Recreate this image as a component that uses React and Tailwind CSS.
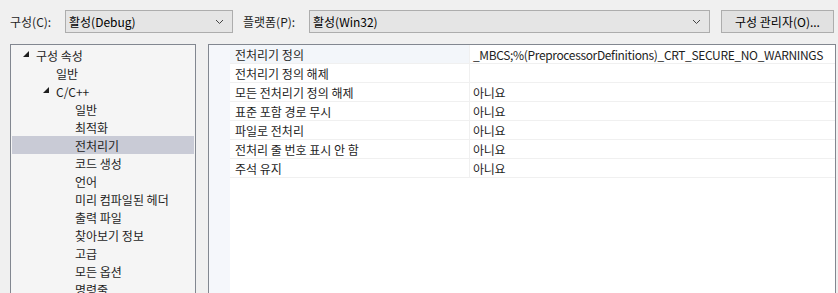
import React from 'react'

const font = { fontFamily: '"Noto Sans CJK KR", "Noto Sans", sans-serif' }

function Chevron(){
  return (
    <svg width="9" height="6" viewBox="0 0 9 6" className="shrink-0">
      <path d="M1 1 L4.5 4.5 L8 1" fill="none" stroke="#444" strokeWidth="1" />
    </svg>
  )
}

function Tri(){
  return (
    <svg width="7" height="7" viewBox="0 0 7 7" className="shrink-0">
      <polygon points="6,0 6,6 0,6" fill="#1e1e1e" />
    </svg>
  )
}

function Combo({ text, width }){
  return (
    <div className={`flex items-center justify-between h-[23px] border border-[#adadad] bg-[#e5e5e5] pl-[3px] pr-[8px] ${width}`}>
      <span className="text-[12px] leading-none text-black">{text}</span>
      <Chevron />
    </div>
  )
}

const tree = [
  { label: '구성 속성', indent: 'pl-[11px]', tri: true },
  { label: '일반', indent: 'pl-[44px]' },
  { label: 'C/C++', indent: 'pl-[31px]', tri: true },
  { label: '일반', indent: 'pl-[63px]' },
  { label: '최적화', indent: 'pl-[63px]' },
  { label: '전처리기', indent: 'pl-[63px]', sel: true },
  { label: '코드 생성', indent: 'pl-[63px]' },
  { label: '언어', indent: 'pl-[63px]' },
  { label: '미리 컴파일된 헤더', indent: 'pl-[63px]' },
  { label: '출력 파일', indent: 'pl-[63px]' },
  { label: '찾아보기 정보', indent: 'pl-[63px]' },
  { label: '고급', indent: 'pl-[63px]' },
  { label: '모든 옵션', indent: 'pl-[63px]' },
  { label: '명령줄', indent: 'pl-[63px]' },
]

const props = [
  ['전처리기 정의', '_MBCS;%(PreprocessorDefinitions)_CRT_SECURE_NO_WARNINGS', true],
  ['전처리기 정의 해제', ''],
  ['모든 전처리기 정의 해제', '아니요'],
  ['표준 포함 경로 무시', '아니요'],
  ['파일로 전처리', '아니요'],
  ['전처리 줄 번호 표시 안 함', '아니요'],
  ['주석 유지', '아니요'],
]

export default function App(){
  return (
    <div className="w-[838px] h-[293px] bg-[#f0f0f0] overflow-hidden text-[#1e1e1e]" style={font}>
      <div className="flex items-center h-[44px] pl-[10px] pb-[1px]">
        <span className="text-[12px] w-[55px]">구성(C):</span>
        <Combo text="활성(Debug)" width="w-[168px]" />
        <span className="text-[12px] ml-[10px] w-[66px]">플랫폼(P):</span>
        <Combo text="활성(Win32)" width="w-[401px]" />
        <button className="ml-[11px] w-[113px] h-[23px] border border-[#adadad] bg-[#e1e1e1] text-[12px] text-black">구성 관리자(O)...</button>
      </div>
      <div className="flex gap-[12px] pl-[10px]">
        <div className="w-[186px] h-[260px] shrink-0 border border-[#828790] bg-[#f5f5f5] p-[1px]">
          {tree.map((t, i) => (
            <div key={i} className={`flex items-center h-[18px] pt-[1px] text-[12px] ${t.indent} ${t.sel ? 'bg-[#c9cbd6]' : ''}`}>
              {t.tri && <span className="mr-[6px] mb-[2px]"><Tri /></span>}
              <span>{t.label}</span>
            </div>
          ))}
        </div>
        <div className="w-[628px] h-[260px] shrink-0 border border-[#828790] bg-white flex">
          <div className="w-[21px] shrink-0 h-full bg-[#f5f7fb]" />
          <div className="flex-1 min-w-0">
            {props.map(([name, val, hi], i) => (
              <div key={i} className="flex h-[19px] border-b border-[#f0f0f0] text-[12px]">
                <div className={`w-[240px] shrink-0 pl-[5px] pt-[1px] flex items-center border-r border-[#f0f0f0] ${hi ? 'bg-[#f3f6fa]' : ''}`}>{name}</div>
                <div className="flex-1 min-w-0 pl-[3px] pt-[1px] flex items-center whitespace-nowrap overflow-hidden tracking-[-0.35px]">{val}</div>
              </div>
            ))}
          </div>
        </div>
      </div>
    </div>
  )
}
